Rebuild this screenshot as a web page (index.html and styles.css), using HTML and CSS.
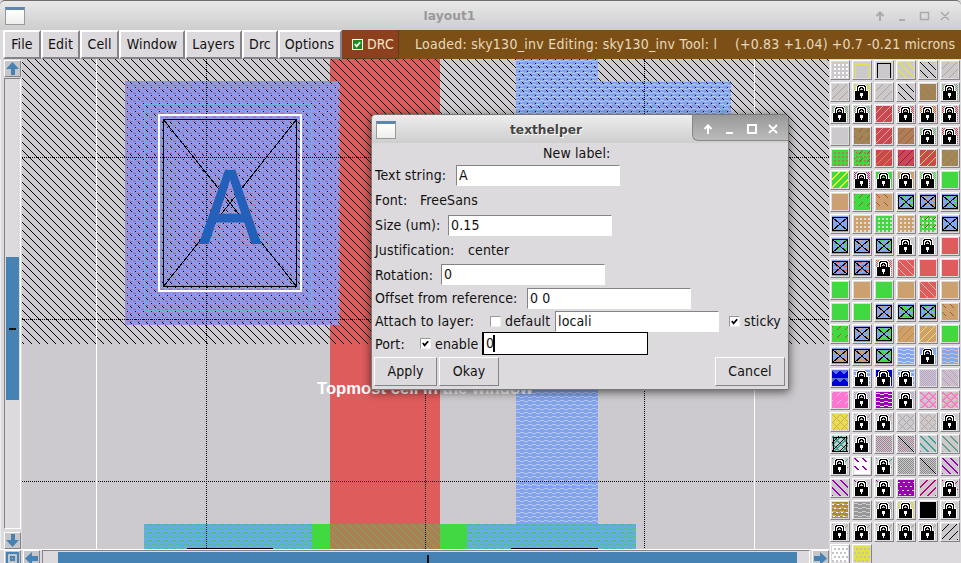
FILE: index.html
```html
<!DOCTYPE html>
<html lang="en">
<head>
<meta charset="utf-8">
<title>layout1</title>
<link rel="stylesheet" href="styles.css">
</head>
<body>
<div class="window">
  <header class="titlebar">
    <span class="win-icon"></span>
    <span class="title">layout1</span>
    <svg class="win-buttons" width="77" height="14" viewBox="0 0 77 14" fill="none" stroke="#aaa" stroke-width="2"><path d="M6 12V4M2.5 7 6 3.5 9.5 7M25 11h6"/><path stroke-width="1.5" d="M46.500 3.500h8v7h-8zM67 3l8 8M75 3l-8 8"/></svg>
  </header>
  <nav class="menubar">
    <div class="menu file">File</div><div class="menu edit">Edit</div><div class="menu cell">Cell</div><div class="menu win">Window</div><div class="menu layers">Layers</div><div class="menu drc">Drc</div><div class="menu options">Options</div>
    <div class="drc-check"><span class="check green"><svg viewBox="0 0 10 10"><path d="M2 4.5 4 7 8 2.5"/></svg></span>DRC</div>
    <div class="status">Loaded: sky130_inv Editing: sky130_inv Tool: l</div>
    <div class="coords">(+0.83 +1.04) +0.7 -0.21 microns</div>
  </nav>
  <main class="work">
    <div class="vscroll">
      <span class="arrow"><svg viewBox="0 0 13 13"><path d="M6.5 0 13 7H9v6H5V7H0z"/></svg></span>
      <div class="vtrough"><div class="vthumb"></div></div>
      <span class="arrow"><svg viewBox="0 0 13 13"><path d="M6.5 13 13 6H9V0H5v6H0z"/></svg></span>
    </div>
    <svg class="layout" width="807" height="490" viewBox="22 59 807 490" shape-rendering="crispEdges">
      <defs>
        <pattern id="hatch" width="8" height="8" patternUnits="userSpaceOnUse"><path fill="#000" d="M0 0h1v1H0zM1 1h1v1H1zM2 2h1v1H2zM3 3h1v1H3zM4 4h1v1H4zM5 5h1v1H5zM6 6h1v1H6zM7 7h1v1H7z"/></pattern>
        <pattern id="sparse" width="8" height="8" patternUnits="userSpaceOnUse"><path fill="#000" d="M2 2h1v1H2zM3 3h1v1H3zM7 7h1v1H7z"/></pattern>
        <pattern id="locali" width="8" height="8" patternUnits="userSpaceOnUse"><path fill="#82a4f0" d="M0 0h8v8H0z"/><path fill="#b5c8f0" d="M0 0h4v1H0zM4 1h4v1H4zM4 4h4v1H4zM0 5h4v1H0z"/></pattern>
        <pattern id="metal" width="8" height="8" patternUnits="userSpaceOnUse"><path fill="#8e9ae8" d="M0 0h8v8H0z"/><path fill="#b088c0" d="M0 0h4v2H0zM4 1h4v1H4zM4 4h4v2H4zM0 5h4v1H0z"/><path fill="#a16f9b" d="M1 1h3v1H1zM5 5h3v1H5z"/></pattern>
        <pattern id="diff" width="8" height="8" patternUnits="userSpaceOnUse"><path fill="#69aedb" d="M0 0h8v8H0z"/><path fill="#4bbf91" d="M0 0h4v1H0zM4 1h4v1H4zM4 4h4v2H4zM0 5h4v1H0z"/></pattern>
        <pattern id="gate" width="8" height="8" patternUnits="userSpaceOnUse"><path fill="#ab8057" d="M0 0h8v8H0z"/><path stroke="#76b04c" d="M0 0l8 8"/></pattern>
      </defs>
      <path fill="#cccace" d="M22 59h807v490H22z"/>
      <path fill="#de5c5c" d="M330 59h110v465H330z"/>
      <path fill="url(#hatch)" d="M22 59h807v285H22z"/>
      <path fill="url(#locali)" d="M516 59h82v465H516zM516 81h215v240H516z"/>
      <path fill="url(#sparse)" d="M516 59h82v22H516zM516 81h215v240H516z"/>
      <path fill="none" stroke="#55b9e5" d="M535 105.5h187v200"/>
      <path fill="url(#metal)" d="M125 81h215v244H125z"/>
      <path fill="url(#sparse)" d="M125 81h215v244H125z"/>
      <path fill="url(#diff)" d="M144 524h168v25H144zM467 524h169v25H467z"/>
      <path fill="#41d841" d="M312 524h18v25H312zM440 524h27v25H440z"/>
      <path fill="url(#gate)" d="M330 524h110v25H330z"/>
      <path fill="none" stroke="#000" d="M187 548.5h86M511 548.5h87"/>
      <path fill="none" stroke="#000" stroke-dasharray="1 1" d="M206.5 59v490M425.5 344v205M644.5 59v490M22 157.5h807M22 319.5h807M22 481.5h807"/>
      <path fill="none" stroke="#fff" d="M96.5 59v490M754.5 59v490"/>
      <path fill="none" stroke="#70b3d5" d="M144.5 104.5h167v206h-167z"/>
      <path fill="none" stroke="#fff" stroke-width="2" d="M159 115h142v176H159z"/>
      <path fill="none" stroke="#000" d="M163.5 119.5h133v167h-133zl133 167M296.500 119.500l-133 167"/>
      <text class="pin" transform="translate(230 243) scale(.87 1)" text-anchor="middle">A</text>
      <text class="cell-name" x="317" y="394" textLength="216" lengthAdjust="spacingAndGlyphs">Topmost cell in the window</text>
    </svg>
    <div class="palette" id="palette"></div>
    <div class="hscroll">
      <span class="arrow zoom"><svg viewBox="0 0 13 13"><path fill-rule="evenodd" d="M0 0h13v13H0zM2 2v9h9V2zM4 4h5v5H4zM6 6v1h1V6z"/></svg></span>
      <span class="arrow"><svg viewBox="0 0 13 13"><path d="M0 6.500 7 0v4h6v5H7v4z"/></svg></span>
      <div class="htrough"><div class="hthumb"></div></div>
      <span class="arrow"><svg viewBox="0 0 13 13"><path d="M13 6.500 6 0v4H0v5h6v4z"/></svg></span>
    </div>
  </main>
</div>
<section class="dialog">
  <header class="dialog-title">
    <span class="win-icon"></span><span class="dialog-name">texthelper</span>
    <span class="dialog-buttons"><svg width="77" height="14" viewBox="0 0 77 14" fill="none" stroke="#fff" stroke-width="2"><path d="M6 12V4M2.500 7 6 3.500 9.500 7M24 11h7"/><path d="M46 3h8v8h-8zM67 3l8 8M75 3l-8 8"/></svg></span>
  </header>
  <div class="form">
    <div class="row heading">New label:</div>
    <div class="row"><label class="l-text">Text string:</label><span class="entry">A</span></div>
    <div class="row"><label class="l-font">Font:</label><span>FreeSans</span></div>
    <div class="row"><label class="l-size">Size (um):</label><span class="entry">0.15</span></div>
    <div class="row"><label class="l-just">Justification:</label><span>center</span></div>
    <div class="row"><label class="l-rot">Rotation:</label><span class="entry">0</span></div>
    <div class="row"><label class="l-off">Offset from reference:</label><span class="entry">0 0</span></div>
    <div class="row"><label class="l-att">Attach to layer:</label><span class="check"></span><span class="default">default</span><span class="entry">locali</span><span class="check sticky"><svg viewBox="0 0 10 10"><path d="M2 4.500 4 7 8 2.500"/></svg></span><span>sticky</span></div>
    <div class="row"><label class="l-port">Port:</label><span class="check"><svg viewBox="0 0 10 10"><path d="M2 4.500 4 7 8 2.500"/></svg></span><span class="enable">enable</span><span class="entry focus">0<i class="caret"></i></span></div>
    <div class="actions"><span class="button apply">Apply</span><span class="button okay">Okay</span><span class="button cancel">Cancel</span></div>
  </div>
</section>
<script src="palette.js"></script>
</body>
</html>
```
FILE: styles.css
```css
* { box-sizing: border-box; }
body { margin: 0; width: 961px; height: 563px; overflow: hidden; background: #dcdadd; color: #111; font: 14px/18px "DejaVu Sans Condensed", "DejaVu Sans", sans-serif; font-stretch: condensed; letter-spacing: .13px; }
.window { width: 961px; height: 563px; display: grid; grid-template-rows: 30px 29px 504px; }
.titlebar { display: flex; align-items: center; border-top: 1px solid #706d70; background: linear-gradient(#e8e8e8, #cecece); border-radius: 5px 5px 0 0; }
.win-icon { width: 20px; height: 18px; margin-left: 5px; border: 1px solid #999; border-top: 3px solid #5f87ae; background: linear-gradient(#fff, #eeeeec); flex: none; }
.title { width: 849px; text-align: center; color: #999; font: bold 12.3px/18px "DejaVu Sans", sans-serif; letter-spacing: 0; }
.win-buttons { flex: none; }
.menubar { display: flex; background: #7c4f17; border-left: 3px solid #dcdadd; white-space: nowrap; }
.menu { background: #dcdadd; border: 2px solid; border-color: #fff #858387 #858387 #fff; text-align: center; line-height: 25px; }
.file { width: 38px; } .edit { width: 39px; } .cell { width: 39px; } .win { width: 66px; } .layers { width: 57px; } .drc { width: 36px; } .options { width: 64px; }
.menu.options { padding-right: 1px; }
.drc-check { width: 57px; background: #8d401e; color: #f0e6c9; display: flex; align-items: center; gap: 4px; padding-left: 10px; border: solid #633b18; border-width: 0 1px 1px 0; }
.check { width: 11px; height: 11px; background: #fff; border: 1px solid; border-color: #999 #eee #eee #999; flex: none; display: flex; }
.check svg { width: 9px; height: 9px; fill: none; stroke: #000; stroke-width: 2; }
.check.green { background: #198b16; border-color: #fff; }
.check.green svg { stroke: #fff; }
.status, .coords { color: #e6dbbd; line-height: 29px; }
.status { width: 303px; margin-left: 16px; overflow: hidden; letter-spacing: .26px; }
.coords { margin-left: 17px; }
.work { display: grid; grid-template-columns: 22px 807px 132px; grid-template-rows: 490px 14px; }
.vscroll { display: flex; flex-direction: column; padding: 1px 1px 0 3px; border-left: 1px solid #eee; }
.arrow { width: 17px; height: 17px; border: 1px solid; border-color: #fff #858387 #858387 #fff; background: #c6c6c8; display: flex; align-items: center; justify-content: center; flex: none; }
.arrow svg { width: 13px; height: 13px; fill: #4682b4; }
.vtrough { width: 17px; height: 451px; margin: 1px 0 3px; padding: 178px 1px 0; border: 1px solid; border-color: #858387 #fff #fff #858387; }
.vthumb { height: 143px; background: linear-gradient(#111, #111) center/7px 2px no-repeat #4682b4; }
.layout { display: block; }
.pin { font: 106px "Liberation Sans", sans-serif; fill: #245fba; stroke: #245fba; stroke-width: 1px; letter-spacing: 0; }
.cell-name { font: bold 16.5px "Liberation Sans", sans-serif; fill: #fff; letter-spacing: 0; }
.palette { grid-row: 1 / 3; grid-column: 3; display: grid; grid-template-columns: repeat(6, 20px); grid-auto-rows: 20px; gap: 2px; padding: 1px 0 0 1px; overflow: hidden; }
.swatch { border: 1px solid; border-color: #fff #858387 #858387 #fff; padding: 1px; background: #dcdadd; }
.swatch svg { display: block; width: 16px; height: 16px; }
.hscroll { grid-row: 2; grid-column: 1 / 3; display: flex; gap: 2px; padding-left: 4px; overflow: hidden; border-top: 1px solid #fff; }
.htrough { width: 770px; height: 18px; padding: 1px 0 0 15px; border: 1px solid; border-color: #858387 #fff #fff #858387; }
.hthumb { width: 739px; height: 16px; background: linear-gradient(#111, #111) center/2px 10px no-repeat #4682b4; }
.dialog { position: absolute; left: 371px; top: 114px; width: 418px; height: 276px; border: 1px solid #777; border-radius: 5px 5px 0 0; background: #dcdadd; box-shadow: 0 2px 10px rgba(0,0,0,.6); overflow: hidden; }
.dialog-title { height: 28px; display: flex; align-items: center; background: linear-gradient(#ededed, #cecece); }
.dialog-title .win-icon { margin-left: 4px; margin-top: 1px; }
.dialog-name { width: 296px; padding: 1px 0 0 4px; text-align: center; font: bold 12.2px/18px "DejaVu Sans", sans-serif; letter-spacing: 0; color: #444; text-shadow: 1px 1px #fff; }
.dialog-buttons { align-self: flex-start; width: 96px; height: 26px; padding: 7px 0 0 9px; background: linear-gradient(#999, #bbb); border: solid #888; border-width: 0 0 1px 1px; border-bottom-left-radius: 6px; }
.form { display: grid; grid-template-rows: 20px 24px 26px 24px 26px 23px 24px 22px 23px 31px; padding: 0 3px; white-space: nowrap; }
.row { display: flex; align-items: center; }
.heading { padding-left: 168px; }
label { flex: none; }
.l-text { width: 81px; } .l-font { width: 45px; } .l-size { width: 73px; } .l-just { width: 93px; } .l-rot { width: 66px; } .l-off { width: 152px; } .l-att { width: 115px; } .l-port { width: 45px; }
.entry { width: 164px; height: 21px; padding-left: 2px; line-height: 19px; background: #fff; border: 1px solid; border-color: #858387 #fff #fff #858387; flex: none; }
.default { margin-left: 4px; width: 50px; } .enable { margin-left: 4px; width: 47px; }
.sticky { margin: 0 4px 0 10px; }
.focus { width: 166px; height: 23px; border: 2px solid #000; display: flex; align-items: center; border-width: 1px 1px 1px 2px; }
.caret { width: 2px; height: 17px; margin-left: -1px; background: #000; }
.actions { display: flex; gap: 2px; padding-top: 2px; }
.button { height: 29px; line-height: 27px; text-align: center; border: 1px solid; border-color: #fff #858387 #858387 #fff; }
.apply { width: 63px; margin-left: -1px; } .okay { width: 60px; } .cancel { width: 70px; margin-left: auto; }
```
FILE: palette.js
```js
// Each row lists six swatches; a swatch is a stack of layers "kind colour".
const G = '#41d841', T = '#cda16f', R = '#de5c5c', B = '#83a6ee', P = '#9b00b4', N = '#cbc9cc';
const dr = '#c64a50', br = '#a98058', tl = '#32a392', y = '#e4e142';
const rows = [
  [`d #fff`, `t ${y};t2 ${y}`, `t #000`, `f ${y};h ${y}`, `f #000`, `b #b5a190`],
  [`b #b5a190`, `c2 ${y};l`, `b #b5a190`, `f #000`, `s ${br};f #6e9b40`, `c2 #78a878;l`],
  [`c2 #78a878;l`, `c2 #78a878;l`, `s ${dr};b #f4a0a0`, `c2 ${dr};l`, `c2 #e65d22;l`, `c2 ${dr};l`],
  [`s ${N}`, `s ${br};b #679c42;z #a54`, `s ${dr};b #f4a0a0`, `s ${br};b #c15447`, `c2 #78a878;l`, `c2 ${dr};l`],
  [`s ${G};d ${br}`, `s ${G};d ${br};z #a43`, `s ${dr};b #dd8d30`, `s ${dr};b #b80075`, `s ${dr};b #ffe344`, `s ${br};f #819444;b #83a653`],
  [`s ${G};b #f4fa30;h2 #f4fa30`, `c2 #bd287e;l`, `s ${G};l`, `s ${T};l`, `c2 ${G};l`, `s ${G}`],
  [`s ${T}`, `s ${G};z #a35a2d`, `s ${T};z2 #a45a2d`, `s ${B};w ${G};x`, `s ${B};w ${T};x`, `s ${B};w ${G};x`],
  [`s ${B};x`, `s ${T};d #ddd`, `s ${G};d #ddd`, `s ${T};d #ddd`, `s ${G};d #ddd;z #a43`, `s ${B};x`],
  [`s ${B};w ${G};x`, `s ${B};w ${T};x`, `s ${B};w ${G};x`, `l`, `l`, `s ${R}`],
  [`s ${B};w ${R};x`, `s ${B};w ${R};x`, `c2 ${R};l`, `s ${R};f #ffb0a0`, `s ${R}`, `s ${R}`],
  [`s ${G}`, `s ${T}`, `s ${G}`, `s ${T}`, `s ${R};f #ffb0a0`, `s ${T}`],
  [`s ${G}`, `s ${G}`, `s ${B};w ${T};x`, `s ${B};w ${G};w2 ${G};x`, `s ${B};w ${G};x`, `s ${T};z2 #a35a2d`],
  [`s ${G};z #a35a2d`, `s ${B};w ${T};x`, `s ${B};w ${G};w2 ${G};x`, `s ${T};b #cc8c22`, `s ${T};b #ffe344`, `s ${G}`],
  [`s ${B};w ${T};w2 ${T};x`, `s ${B};w ${T};w2 ${T};x`, `s ${B};w ${G};w2 ${G};x`, `s ${B};w #cad8f4`, `s ${B};l`, `s ${B};w #d2c1b6`],
  [`s #0000d4;k #5872dc`, `s ${B};w #d8e2f8;l`, `s #0000d4;l`, `s ${B};w #d8e2f8;l`, `c #b9a1cc`, `c #c9b0ca;f #b797be`],
  [`s #ff75cf;z #ffc1ea`, `c #b9a1cc;l`, `s ${P};w #ddd`, `c #b9a1cc;l`, `g #ff75c8;g2 #ff75c8`, `g #ff75c8;g2 #ff75c8;b #dda584`],
  [`s ${y};g #dc9c91`, `z #c8a;l`, `z #c8a;l`, `g #aaa`, `g #b8a79a`, `l`],
  [`g ${tl};g2 ${tl};b #000;t #000;t3 #000`, `l`, `c #8d8b91;g #ba739b`, `c #8d8b91;g #ba739b;m #000`, `f ${tl};h ${tl}`, `f ${tl};h #9a9770`],
  [`z ${tl};l`, `s #fff;z2 ${P};h3 ${P}`, `z ${tl};l`, `c #898989`, `c #898989;m #000`, `f ${P};h ${P}`],
  [`f ${P};h ${P}`, `z2 ${P};l`, `z2 ${P};l`, `s ${P};v #ddd`, `b #c4007c;h2 #c4007c`, `z #c4007c;l`],
  [`s #b18a36;w #d6a59c;v #fff`, `s #969696;w #ccc`, `c #999;l`, `c2 ${y};l`, `s #000`, `l`],
  [`z #a59a62;l`, `z #a59a62;l`, `z #a59a62;l`, `z #a59a62;l`, `z #a59a62;l`, `b #000`],
  [`s #fff;q #c6c4c7`, `s ${y};q #c6c4a7`]
];
const tests = {
  s: () => true,
  d: (a, b) => a % 4 > 1 && b % 4 > 1,
  q: (a, b) => b % 4 > 1 && (a + (b >> 2) * 2) % 4 > 1,
  v: (a, b) => b % 4 === 2 && (a + (b >> 2) * 3) % 5 < 2,
  k: (a, b) => b % 8 < 4 && (a + (b >> 3) * 4) % 8 >= b % 8 && (a + (b >> 3) * 4) % 8 <= 7 - b % 8,
  t: (a, b) => (b === 1 && a > 0 && a < 15) || (b > 0 && (a === 1 || a === 14)),
  t2: (a, b) => b === 2 && a > 0 && a < 15,
  t3: (a, b) => b === 15,
  f: (a, b) => (a - b + 16) % 8 === 0,
  h: (a, b) => (a - b + 15) % 8 === 0,
  h2: (a, b) => (a + b) % 8 === 7,
  h3: (a, b) => (a - b + 15) % 8 === 0 && b % 8 < 4,
  b: (a, b) => (a + b) % 8 === 6,
  z: (a, b) => (a + b) % 8 < 1 && b % 8 < 4,
  z2: (a, b) => (a - b + 16) % 8 < 1 && b % 8 < 4,
  m: (a, b) => a === b,
  g: (a, b) => (a + b) % 8 < 1 || (a - b + 16) % 8 < 1,
  g2: (a, b) => (a + b) % 8 === 1 || (a - b + 16) % 8 === 1,
  c: (a, b) => (a + b) % 2 === 0,
  c2: (a, b) => (a + b) % 2 === 0 && (a < 4 || a > 11 || b % 4 < 2),
  w: (a, b) => b % 4 === (a % 8 < 4 ? 1 : 2),
  w2: (a, b) => b % 8 === 4
};
const bitmap = [
  '....wwwwwww.....',
  '...wbbbbbbbw....',
  '..wbbwwwwwbbw...',
  '..wbwwbbbwwbw...',
  '..wbwbb.bbwbw...',
  '..wbwb...bwbw...',
  '.wwbwbbbbbwbww..',
  'wbbbbbbbbbbbbbw.',
  'wbbbbbbbbbbbbbw.',
  'wbbbbbwwwbbbbbw.',
  'wbbbbbwwwbbbbbw.',
  'wbbbbbwwwbbbbbw.',
  'wbbbbbbwbbbbbbw.',
  'wbbbbbbwbbbbbbw.',
  'wbbbbbbbbbbbbbw.',
  'wbbbbbbbbbbbbbw.'
];
function pixels(color, test) {
  let d = '';
  for (let b = 0; b < 16; b++) for (let a = 0; a < 16; a++) if (test(a, b)) d += `M${a} ${b}h1v1h-1z`;
  return `<path fill="${color}" d="${d}"/>`;
}
const lock = pixels('#fff', (a, b) => bitmap[b][a] === 'w') + pixels('#000', (a, b) => bitmap[b][a] === 'b');
function draw(spec) {
  let out = `<path fill="${N}" d="M0 0h16v16H0z"/>`;
  for (const layer of spec.split(';')) {
    const [kind, color] = layer.split(' ');
    if (kind === 'l') out += lock;
    else if (kind === 'x') out += '<path fill="none" stroke="#000" d="M.5 1.500h15v13H.5zl15 13M15.500 1.500l-15 13"/>';
    else out += pixels(color, tests[kind]);
  }
  return `<div class="swatch"><svg viewBox="0 0 16 16" shape-rendering="crispEdges">${out}</svg></div>`;
}
document.getElementById('palette').innerHTML = rows.flat().map(draw).join('');
```
